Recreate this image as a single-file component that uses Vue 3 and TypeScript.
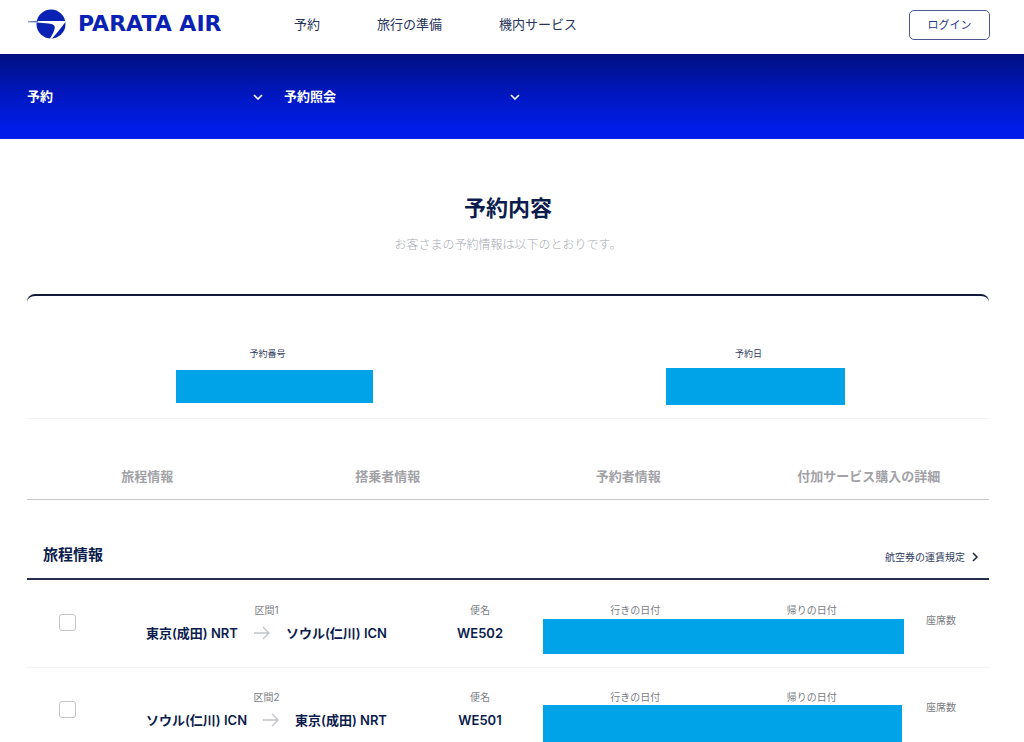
<script setup lang="ts">
import { ref } from 'vue'

interface Segment {
  id: number
  from: string
  to: string
  flight: string
  selected: boolean
}

const navItems: string[] = ['予約', '旅行の準備', '機内サービス']
const tabs: string[] = ['旅程情報', '搭乗者情報', '予約者情報', '付加サービス購入の詳細']
const section = ref('予約')
const page = ref('予約照会')

const segments = ref<Segment[]>([
  { id: 1, from: '東京(成田) NRT', to: 'ソウル(仁川) ICN', flight: 'WE502', selected: false },
  { id: 2, from: 'ソウル(仁川) ICN', to: '東京(成田) NRT', flight: 'WE501', selected: false },
])
</script>

<template>
  <div class="page">
    <header class="header">
      <a class="logo" href="#" aria-label="PARATA AIR">
        <svg class="logo-mark" width="38" height="30" viewBox="0 0 38 30" aria-hidden="true">
          <circle cx="23" cy="15" r="14.5" fill="#0a22b4" />
          <path
            d="M0 12.3 L10 12 L37.6 11.9 L37.6 12.8 C33 18.5 29 25 23.6 29.8 L21.8 29.8 C24.4 26 26.6 21.6 26.8 18.6 C26.8 16 24.5 15 20.5 14.5 L9 13.5 L0 13.2 Z"
            fill="#fff"
          />
          <path d="M0 12.2 L10 11.8 L10 13.6 L0 13.2 Z" fill="#6478c0" />
        </svg>
        <span class="logo-text">PARATA AIR</span>
      </a>
      <nav class="nav">
        <a v-for="item in navItems" :key="item" href="#">{{ item }}</a>
      </nav>
      <button class="login" type="button">ログイン</button>
    </header>

    <div class="band">
      <div class="picker">
        <select v-model="section" aria-label="メニュー">
          <option>予約</option>
        </select>
        <svg width="10" height="6" viewBox="0 0 10 6" aria-hidden="true">
          <path d="M1 1 L5 5 L9 1" />
        </svg>
      </div>
      <div class="picker">
        <select v-model="page" aria-label="サブメニュー">
          <option>予約照会</option>
        </select>
        <svg width="10" height="6" viewBox="0 0 10 6" aria-hidden="true">
          <path d="M1 1 L5 5 L9 1" />
        </svg>
      </div>
    </div>

    <main class="content">
      <h1>予約内容</h1>
      <p class="lead">お客さまの予約情報は以下のとおりです。</p>

      <dl class="summary">
        <div class="summary-item">
          <dt>予約番号</dt>
          <dd><span class="mask mask-number"></span></dd>
        </div>
        <div class="summary-item">
          <dt>予約日</dt>
          <dd><span class="mask mask-date"></span></dd>
        </div>
      </dl>

      <nav class="tabs">
        <a v-for="tab in tabs" :key="tab" href="#">{{ tab }}</a>
      </nav>

      <section>
        <div class="section-head">
          <h2>旅程情報</h2>
          <a class="rules" href="#">
            航空券の運賃規定
            <svg width="6" height="10" viewBox="0 0 6 10" aria-hidden="true">
              <path d="M1 1 L5 5 L1 9" />
            </svg>
          </a>
        </div>

        <ul class="segments">
          <li v-for="seg in segments" :key="seg.id" class="segment">
            <div class="check">
              <input v-model="seg.selected" type="checkbox" :aria-label="'区間' + seg.id" />
            </div>
            <div class="route">
              <span class="label">区間{{ seg.id }}</span>
              <div class="route-line">
                <strong>{{ seg.from }}</strong>
                <svg width="16" height="14" viewBox="0 0 16 14" aria-hidden="true">
                  <path d="M0 7 H15 M9 1 L15 7 L9 13" />
                </svg>
                <strong>{{ seg.to }}</strong>
              </div>
            </div>
            <div class="flight">
              <span class="label">便名</span>
              <strong>{{ seg.flight }}</strong>
            </div>
            <div class="dates">
              <div class="date-labels">
                <span class="label">行きの日付</span>
                <span class="label">帰りの日付</span>
              </div>
              <span class="mask mask-dates"></span>
            </div>
            <span class="label seats">座席数</span>
          </li>
        </ul>
      </section>
    </main>
  </div>
</template>

<style>
body {
  margin: 0;
  background: #fff;
}
</style>

<style scoped>
.page {
  font-family: Inter, 'Noto Sans CJK JP', sans-serif;
  font-size: 13px;
  line-height: 20px;
  color: #0b1c4d;
}

a {
  color: inherit;
  text-decoration: none;
}

.header {
  display: flex;
  align-items: center;
  height: 54px;
  padding: 0 34px 0 28px;
  box-sizing: border-box;
}

.logo {
  display: flex;
  align-items: center;
  gap: 12px;
  width: 266px;
  padding-bottom: 7px;
}

.logo-mark {
  flex: none;
}

.logo-text {
  font-family: 'DejaVu Sans', sans-serif;
  font-size: 22px;
  font-weight: 700;
  line-height: 28px;
  white-space: nowrap;
  color: #0a22b4;
}

.nav {
  display: flex;
  gap: 57px;
  padding-bottom: 6px;
  color: #26335a;
}

.login {
  width: 81px;
  height: 30px;
  margin: 0 0 4px auto;
  padding: 0;
  border: 1px solid #4d5890;
  border-radius: 5px;
  background: #fff;
  font: inherit;
  font-size: 11px;
  color: #26368a;
}

.band {
  display: flex;
  align-items: center;
  gap: 20px;
  height: 85px;
  padding: 0 27px 2px;
  box-sizing: border-box;
  background: linear-gradient(#000f82, #0018c8 55%, #001ce8 90%);
}

.picker {
  position: relative;
  width: 237px;
}

.picker select {
  appearance: none;
  display: block;
  width: 100%;
  padding: 0;
  border: 0;
  background: transparent;
  font: inherit;
  font-weight: 700;
  color: #fff;
}

.picker svg {
  position: absolute;
  top: 8px;
  right: 1px;
  pointer-events: none;
}

.picker path {
  fill: none;
  stroke: #fff;
  stroke-width: 1.6;
}

.content {
  padding: 53px 35px 0 27px;
}

h1 {
  margin: 0;
  font-size: 22px;
  font-weight: 700;
  line-height: 32px;
  text-align: center;
}

.lead {
  margin: 11px 0 0;
  font-size: 12px;
  font-weight: 300;
  text-align: center;
  color: #a6aab2;
}

.summary {
  display: grid;
  grid-template-columns: 1fr 1fr;
  margin: 39px 0 0;
  padding-top: 50px;
  border-top: 2px solid #0f1a3c;
  border-bottom: 1px solid #f2f2f4;
  border-radius: 8px 8px 0 0;
}

.summary-item {
  text-align: center;
}

.summary dt {
  font-size: 9px;
  line-height: 16px;
  color: #2f3c5e;
}

.summary dd {
  display: flex;
  align-items: center;
  justify-content: center;
  height: 37px;
  margin: 6px 0 13px;
  padding-left: 13px;
}

.mask {
  display: block;
  background: #00a2e8;
}

.mask-number {
  width: 197px;
  height: 33px;
}

.mask-date {
  width: 179px;
  height: 37px;
}

.tabs {
  display: grid;
  grid-template-columns: repeat(4, 1fr);
  padding: 47px 0 13px;
  border-bottom: 1px solid #c8c8ca;
  font-weight: 700;
  text-align: center;
  color: #a2a2a6;
}

.section-head {
  display: flex;
  align-items: center;
  justify-content: space-between;
  margin-top: 44px;
  padding: 0 11px 12px 16px;
  border-bottom: 2px solid #27304a;
}

h2 {
  margin: 0;
  font-size: 15px;
  font-weight: 700;
  line-height: 22px;
}

.rules {
  display: flex;
  align-items: center;
  gap: 7px;
  padding-top: 4px;
  font-size: 10px;
  line-height: 18px;
  color: #2f3c5e;
}

.rules path {
  fill: none;
  stroke: #16213f;
  stroke-width: 1.5;
}

.segments {
  margin: 0;
  padding: 0;
  list-style: none;
}

.segment {
  display: grid;
  grid-template-columns: 119fr 271fr 126fr 361fr 85fr;
  align-items: start;
  padding: 22px 0 13px;
  border-bottom: 1px solid #f2f2f4;
}

.segment + .segment {
  padding-top: 21px;
}

.label {
  font-size: 10px;
  line-height: 16px;
  color: #7a7c82;
}

.check {
  padding: 12px 0 0 32px;
}

.check input {
  appearance: none;
  display: block;
  width: 17px;
  height: 17px;
  margin: 0;
  border: 1px solid #c4c4c8;
  border-radius: 3px;
  background: #fff;
}

.check input:checked {
  background: #0a22b4;
}

.route {
  display: flex;
  flex-direction: column;
  align-items: center;
  gap: 5px;
  justify-self: start;
}

.route-line {
  display: flex;
  align-items: center;
  gap: 16px;
  white-space: nowrap;
}

strong {
  font-weight: 600;
}

.route path {
  fill: none;
  stroke: #c0c4ca;
  stroke-width: 1.3;
}

.flight {
  display: flex;
  flex-direction: column;
  align-items: center;
  gap: 5px;
}

.date-labels {
  display: grid;
  grid-template-columns: 1fr 1fr;
  padding: 0 4px;
  text-align: center;
}

.mask-dates {
  height: 35px;
  margin-top: 1px;
}

.segment + .segment .mask-dates {
  height: 38px;
  margin: 0 2px 0 0;
}

.seats {
  padding: 10px 0 0 22px;
}
</style>
